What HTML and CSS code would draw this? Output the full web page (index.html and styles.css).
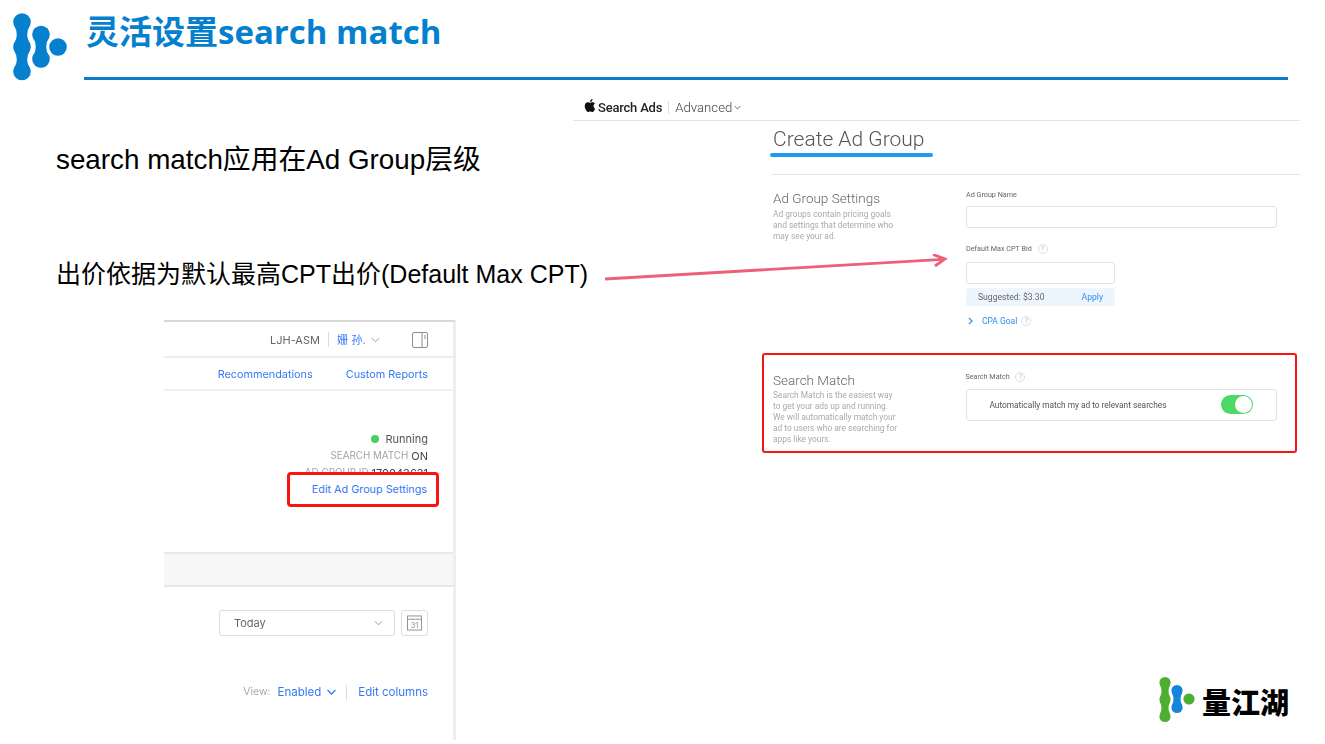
FILE: index.html
```html
<!DOCTYPE html>
<html lang="zh-CN">
<head>
<meta charset="utf-8">
<title>灵活设置search match</title>
<link rel="stylesheet" href="styles.css">
</head>
<body>
<main class="slide">
  <svg class="brand" viewBox="0 0 80 90" aria-hidden="true">
    <g fill="#0580cf">
      <circle cx="22" cy="22" r="8.800"/><circle cx="22" cy="47" r="8.800"/><circle cx="22" cy="71.500" r="8.800"/>
      <circle cx="41" cy="34.500" r="8.800"/><circle cx="41" cy="59" r="8.800"/><circle cx="58" cy="47" r="8.800"/>
      <path d="M14 25Q19.500 34.500 14 44H30Q24.500 34.500 30 25Z"/>
      <path d="M14 50Q19.500 59.500 14 69H30Q24.500 59.500 30 50Z"/>
      <path d="M33 37Q38.500 46.750 33 56.500H49Q43.500 46.750 49 37Z"/>
    </g>
  </svg>
  <h1 class="title">灵活设置search match</h1>
  <div class="title-rule"></div>

  <p class="point point-one">search match应用在Ad Group层级</p>
  <p class="point point-two">出价依据为默认最高CPT出价(Default Max CPT)</p>

  <svg class="arrow" viewBox="0 0 345 30" aria-hidden="true">
    <path d="M1 25 339 5.300M329 .5 341 5 331 12" fill="none" stroke="#ee5f78" stroke-width="2.800"/>
  </svg>

  <section class="shot-left">
    <div class="account-row">
      <span class="account">LJH-ASM</span>
      <span class="divider"></span>
      <span class="user">姗 孙.</span>
      <svg class="chev-small" viewBox="0 0 10 6"><path d="M1 1 5 5 9 1" fill="none" stroke="#8e8e93"/></svg>
      <svg class="panel-icon" viewBox="0 0 16 16"><rect x=".5" y=".5" width="15" height="15" rx="1.500" fill="none" stroke="#8e8e93"/><path d="M10 1V15M12 4H14M12 6H14" stroke="#8e8e93" fill="none"/></svg>
    </div>
    <nav class="nav-row">
      <a>Recommendations</a>
      <a>Custom Reports</a>
    </nav>
    <div class="status">
      <div class="status-line"><i class="dot"></i><span class="running">Running</span></div>
      <div class="status-line"><span class="meta">SEARCH MATCH</span>&nbsp;<span class="on">ON</span></div>
      <div class="status-line"><span class="meta">AD GROUP ID</span>&nbsp;<span class="on">170043631</span></div>
      <div class="edit-box"><a>Edit Ad Group Settings</a></div>
    </div>
    <div class="band"></div>
    <div class="date-row">
      <div class="select"><span>Today</span><svg class="chev-small" viewBox="0 0 10 6"><path d="M1 1 5 5 9 1" fill="none" stroke="#8e8e93"/></svg></div>
      <div class="cal">
        <svg viewBox="0 0 16 16"><rect x=".5" y=".5" width="15" height="15" fill="none" stroke="#8e8e93"/><path d="M1 4H15" stroke="#8e8e93"/><text x="8" y="13" text-anchor="middle" class="cal-num">31</text></svg>
      </div>
    </div>
    <div class="view-row">
      <span class="view-label">View:</span>
      <a class="view-value">Enabled</a>
      <svg class="chev-blue" viewBox="0 0 10 6"><path d="M1 1 5 5 9 1" fill="none" stroke="#3478f6" stroke-width="1.300"/></svg>
      <span class="divider"></span>
      <a>Edit columns</a>
    </div>
  </section>

  <section class="shot-right">
    <header class="ads-bar">
      <svg class="apple" viewBox="0 0 24 28"><path d="M17.600 14.800c0-3 2.500-4.500 2.600-4.600-1.400-2.100-3.600-2.400-4.400-2.400-1.900-.2-3.600 1.100-4.600 1.100-.9 0-2.400-1.100-4-1.100-2 0-3.900 1.200-5 3-2.100 3.700-.5 9.200 1.500 12.200 1 1.500 2.200 3.100 3.800 3 1.500-.1 2.100-1 3.900-1s2.400 1 4 1c1.700 0 2.700-1.500 3.700-2.900 1.200-1.700 1.600-3.300 1.700-3.400-.1 0-3.200-1.200-3.200-4.900zM14.600 5.800c.8-1 1.400-2.400 1.200-3.800-1.200.1-2.600.8-3.500 1.800-.8.9-1.400 2.300-1.300 3.700 1.400.1 2.700-.7 3.600-1.700z" fill="#111"/></svg>
      <strong class="ads-name">Search Ads</strong>
      <span class="ads-sep"></span>
      <span class="ads-mode">Advanced</span>
      <svg class="ads-chev" viewBox="0 0 10 6"><path d="M1 1 5 5 9 1" fill="none" stroke="#555" stroke-width="1.300"/></svg>
    </header>
    <div class="form-col">
      <h2 class="form-title">Create Ad Group</h2>
      <div class="title-mark"></div>
      <div class="settings">
        <div class="settings-text">
          <h3>Ad Group Settings</h3>
          <p>Ad groups contain pricing goals<br>and settings that determine who<br>may see your ad.</p>
        </div>
        <div class="settings-fields">
          <label class="field-label">Ad Group Name</label>
          <div class="input input-wide"></div>
          <label class="field-label bid-label">Default Max CPT Bid <i class="help">?</i></label>
          <div class="input input-short"></div>
          <div class="suggest"><span>Suggested: $3.30</span><a>Apply</a></div>
          <div class="cpa"><svg viewBox="0 0 6 10"><path d="M1 1 5 5 1 9" fill="none" stroke="#1d8cf8" stroke-width="1.400"/></svg><a>CPA Goal</a><i class="help">?</i></div>
        </div>
      </div>
    </div>
  </section>

  <section class="match-box">
    <div class="settings-text">
      <h3>Search Match</h3>
      <p>Search Match is the easiest way<br>to get your ads up and running.<br>We will automatically match your<br>ad to users who are searching for<br>apps like yours.</p>
    </div>
    <div class="match-fields">
      <label class="field-label">Search Match <i class="help">?</i></label>
      <div class="match-input">
        <span>Automatically match my ad to relevant searches</span>
        <span class="toggle"><i></i></span>
      </div>
    </div>
  </section>

  <footer class="footer-logo">
    <svg viewBox="0 0 40 50" aria-hidden="true">
      <g fill="#4fae32">
        <circle cx="8" cy="6.500" r="5.600"/><circle cx="8" cy="23.500" r="5.600"/><circle cx="8" cy="40.500" r="5.600"/>
        <circle cx="32" cy="23" r="5.600"/>
        <path d="M3 9Q6 15 3 21H13Q10 15 13 9Z"/><path d="M3 26Q6 32 3 38H13Q10 32 13 26Z"/>
      </g>
      <g fill="#1485d8">
        <circle cx="20" cy="14.500" r="5.600"/><circle cx="20" cy="31.500" r="5.600"/>
        <path d="M15 17Q18 23 15 29H25Q22 23 25 17Z"/>
      </g>
    </svg>
    <span>量江湖</span>
  </footer>
</main>
</body>
</html>
```
FILE: styles.css
```css
* { box-sizing: border-box; margin: 0; padding: 0; }
html, body { background: #fff; }
body { width: 1325px; height: 744px; overflow: hidden; font-family: "Liberation Sans", "Noto Sans CJK SC", sans-serif; }
a { color: #3478f6; }
.slide { position: relative; width: 1325px; height: 744px; overflow: hidden; background: #fff; }

.brand { position: absolute; left: 0; top: 0; width: 80px; height: 90px; }
.title { position: absolute; left: 86px; top: 10px; font: 700 33px/44px "Open Sans", "Noto Sans CJK SC", sans-serif; color: #0580cf; white-space: nowrap; }
.title-rule { position: absolute; left: 84px; top: 77px; width: 1204px; height: 3px; background: #0a7cc8; }

.point { position: absolute; left: 56px; font-size: 27.800px; line-height: 32px; color: #000; white-space: nowrap; }
.point-one { top: 144px; }
.point-two { top: 258px; font-size: 25px; }
.arrow { position: absolute; left: 604px; top: 254px; width: 345px; height: 30px; }

/* left screenshot */
.shot-left { position: absolute; left: 164px; top: 320px; width: 292px; height: 420px; border-top: 2px solid #d8d8d8; border-right: 3px solid #eeeeee; font: 11px/14px Inter, "Noto Sans CJK SC", sans-serif; color: #555; filter: blur(.4px); display: flex; flex-direction: column; }
.account-row { height: 36px; padding: 1px 25px 0 0; border-bottom: 2px solid #ededed; display: flex; align-items: center; justify-content: flex-end; font-size: 11px; }
.account { color: #666; }
.divider { width: 1px; height: 15px; background: #dcdcdc; margin: 0 8px; }
.user { color: #3478f6; letter-spacing: .2px; }
.chev-small { width: 9px; height: 6px; margin-left: 5px; }
.panel-icon { width: 16px; height: 16px; margin-left: 32px; }
.nav-row { height: 33px; padding: 0 25px 0 0; border-bottom: 2px solid #efefef; display: flex; align-items: center; justify-content: flex-end; gap: 33px; font-size: 10.850px; }
.status { position: relative; height: 163px; padding: 40px 25px 0 0; display: flex; flex-direction: column; align-items: flex-end; border-bottom: 2px solid #e8e8e8; }
.status-line { height: 16.800px; display: flex; align-items: center; font-size: 11px; }
.dot { width: 8px; height: 8px; border-radius: 50%; background: #45d15f; margin-right: 7px; }
.running { color: #555; }
.meta { color: #a3a3a3; font-size: 9.800px; }
.on { color: #444; font-size: 11px; }
.edit-box { position: absolute; right: 14px; top: 81px; width: 152px; height: 35px; border: 3px solid #fa1410; border-radius: 4px; background: #fff; display: flex; align-items: center; justify-content: flex-end; padding-right: 9px; }
.edit-box a { font-size: 10.800px; }
.band { height: 33px; background: #f7f7f7; border-bottom: 2px solid #e8e8e8; }
.date-row { display: flex; justify-content: flex-end; gap: 6px; padding: 23px 25px 0 0; }
.select { width: 176px; height: 26px; border: 1px solid #ddd; border-radius: 3px; display: flex; align-items: center; justify-content: space-between; padding: 0 11px 0 14px; color: #666; }
.cal { width: 27px; height: 26px; border: 1px solid #ddd; border-radius: 3px; display: flex; align-items: center; justify-content: center; }
.cal svg { width: 15px; height: 16px; }
.cal-num { font: 8px Inter, sans-serif; fill: #8e8e93; }
.view-row { margin-top: 48px; padding-right: 25px; height: 16px; display: flex; align-items: center; justify-content: flex-end; font-size: 11.500px; }
.view-label { color: #aaa; margin-right: 7px; font-size: 10.500px; }
.chev-blue { width: 11px; height: 6px; margin-left: 5px; }
.view-row .divider { margin: 0 11px 0 9px; }

/* right screenshot */
.shot-right { position: absolute; left: 573px; top: 95px; width: 727px; height: 240px; font-family: Roboto, "Liberation Sans", sans-serif; filter: blur(.4px); }
.ads-bar { height: 26px; border-bottom: 1px solid #e4e4e4; display: flex; align-items: center; padding: 0 0 1px 11px; }
.apple { width: 13px; height: 15px; margin-right: 1px; margin-top: -3px; }
.ads-name { font-size: 13px; font-weight: 500; color: #222; letter-spacing: -.2px; }
.ads-sep { width: 1px; height: 13px; background: #ddd; margin: 0 6px; }
.ads-mode { font-size: 13.200px; font-weight: 300; color: #444; }
.ads-chev { width: 7px; height: 5px; margin-left: 2px; }
.form-col { margin-left: 199px; }
.form-title { font-size: 21px; line-height: 26px; font-weight: 300; color: #555; margin-top: 5px; padding-left: 1px; }
.title-mark { width: 163px; height: 4px; margin: 1px 0 0 -2px; border-radius: 2px; background: #1c9bf0; }
.settings { margin-top: 17px; padding-top: 15px; border-top: 1px solid #e4e4e4; display: flex; height: 170px; }
.settings-text { width: 194px; flex: none; padding-left: 1px; }
.settings-text h3 { font-size: 13.500px; line-height: 17px; font-weight: 300; color: #666; }
.settings-text p { font-size: 8.400px; line-height: 11px; color: #aaa; margin-top: 2px; }
.settings-fields { flex: 1; }
.field-label { display: block; font-size: 7.200px; line-height: 10px; color: #666; }
.input { border: 1px solid #e2e2e2; border-radius: 3px; background: #fff; height: 22px; }
.input-wide { width: 311px; margin-top: 6px; }
.bid-label { margin-top: 16px; }
.input-short { width: 149px; margin-top: 8px; }
.help { display: inline-block; width: 10px; height: 10px; border: 1px solid #ddd; border-radius: 50%; font: 7px/8px Roboto, sans-serif; color: #bbb; text-align: center; margin-left: 4px; vertical-align: middle; }
.suggest { width: 149px; height: 18px; margin-top: 4px; background: #edf5fd; display: flex; align-items: center; justify-content: space-between; padding: 0 12px; font-size: 8.600px; color: #666; border-radius: 2px; }
.suggest a { color: #2d8ff0; }
.cpa { display: flex; align-items: center; margin-top: 10px; font-size: 8.500px; }
.cpa svg { width: 5px; height: 8px; margin-left: 2px; margin-right: 9px; }
.cpa a { color: #2d8ff0; }

/* search match callout */
.match-box { position: absolute; left: 762px; top: 353px; width: 535px; height: 100px; border: 2.500px solid #fa1410; border-radius: 3px; display: flex; padding: 17px 0 0 8px; font-family: Roboto, "Liberation Sans", sans-serif; filter: blur(.3px); }
.match-box .settings-text { width: 193.500px; }
.match-box .settings-text h3 { line-height: 16px; }
.match-fields { width: 311px; }
.match-input { margin-top: 7px; height: 32px; border: 1px solid #e2e2e2; border-radius: 3px; display: flex; align-items: center; justify-content: space-between; padding: 0 23px 1px 23px; font-size: 8.300px; color: #555; }
.toggle { width: 32px; height: 19px; border-radius: 10px; background: #4cd964; display: flex; justify-content: flex-end; align-items: center; padding-right: 1px; }
.toggle i { width: 17px; height: 17px; border-radius: 50%; background: #fff; }

.footer-logo { position: absolute; left: 1157px; top: 676px; display: flex; align-items: center; gap: 5px; font: 900 29px/40px "Noto Sans CJK SC", sans-serif; color: #000; }
.footer-logo svg { width: 40px; height: 50px; }
```
